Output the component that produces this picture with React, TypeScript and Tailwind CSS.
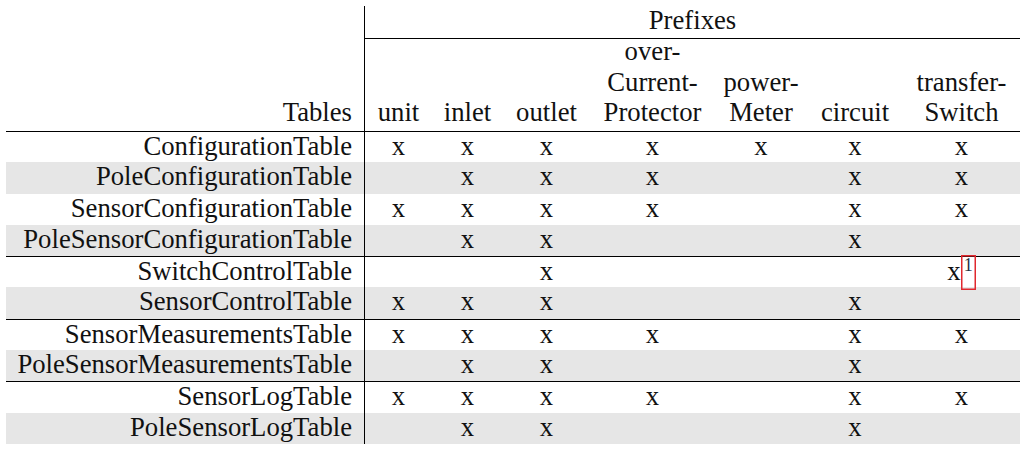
const cols =
  "grid grid-cols-[359px_67px_71px_87px_125px_92px_96px_117px]";

type Key = "u" | "i" | "o" | "p" | "m" | "c" | "s" | "S";

type Row = {
  name: string;
  marks: Key[];
  ruleAbove?: boolean;
};

const order: Key[] = ["u", "i", "o", "p", "m", "c", "s"];

const rows: Row[] = [
  { name: "ConfigurationTable", marks: ["u", "i", "o", "p", "m", "c", "s"], ruleAbove: true },
  { name: "PoleConfigurationTable", marks: ["i", "o", "p", "c", "s"] },
  { name: "SensorConfigurationTable", marks: ["u", "i", "o", "p", "c", "s"] },
  { name: "PoleSensorConfigurationTable", marks: ["i", "o", "c"] },
  { name: "SwitchControlTable", marks: ["o", "S"], ruleAbove: true },
  { name: "SensorControlTable", marks: ["u", "i", "o", "c"] },
  { name: "SensorMeasurementsTable", marks: ["u", "i", "o", "p", "c", "s"], ruleAbove: true },
  { name: "PoleSensorMeasurementsTable", marks: ["i", "o", "c"] },
  { name: "SensorLogTable", marks: ["u", "i", "o", "p", "c", "s"], ruleAbove: true },
  { name: "PoleSensorLogTable", marks: ["i", "o", "c"] },
];

const headings: string[][] = [
  ["unit"],
  ["inlet"],
  ["outlet"],
  ["over-", "Current-", "Protector"],
  ["power-", "Meter"],
  ["circuit"],
  ["transfer-", "Switch"],
];

const Mark = ({ k, marks }: { k: Key; marks: Key[] }) => {
  if (k === "s" && marks.includes("S")) {
    return (
      <div className="flex items-start justify-center">
        <span className="leading-[28px]">x</span>
        {/* footnote link, red hyperref box */}
        <span className="mt-[-2.5px] inline-block h-[35px] w-[15px] pt-[1px] text-center text-[18px] leading-[18px] text-[#1f3044] shadow-[inset_0_0_0_1.5px_#e0282e]">
          1
        </span>
      </div>
    );
  }
  return (
    <div className="text-center leading-[28px]">
      {marks.includes(k) ? "x" : ""}
    </div>
  );
};

export default function App() {
  return (
    <div className="h-[452px] w-[1022px] bg-white pl-[6px] pt-[6px] font-['Liberation_Serif','DejaVu_Serif',serif] text-[26.7px] text-[#111]">
      <div className={cols}>
        <div className="h-[32.5px] border-r border-black" />
        <div className="col-span-7 border-b border-black text-center leading-[28px]">
          Prefixes
        </div>
      </div>
      <div className={cols}>
        <div className="flex h-[92.5px] items-end justify-end border-r border-black pb-[3.5px] pr-[12px] leading-[30.5px]">
          Tables
        </div>
        {headings.map((lines, i) => (
          <div
            key={i}
            className="flex h-[92.5px] flex-col items-center justify-end pb-[3.5px] leading-[30.5px]"
          >
            {lines.map((l) => (
              <span key={l}>{l}</span>
            ))}
          </div>
        ))}
      </div>
      {rows.map((r, i) => (
        <div
          key={r.name}
          className={`${cols} h-[31.3px] w-[1014px] ${r.ruleAbove ? "border-t border-black" : ""} ${i % 2 === 1 ? "bg-[#e6e6e6]" : ""}`}
        >
          <div className="border-r border-black pr-[12px] text-right leading-[28px]">
            {r.name}
          </div>
          {order.map((k) => (
            <Mark key={k} k={k} marks={r.marks} />
          ))}
        </div>
      ))}
    </div>
  );
}
